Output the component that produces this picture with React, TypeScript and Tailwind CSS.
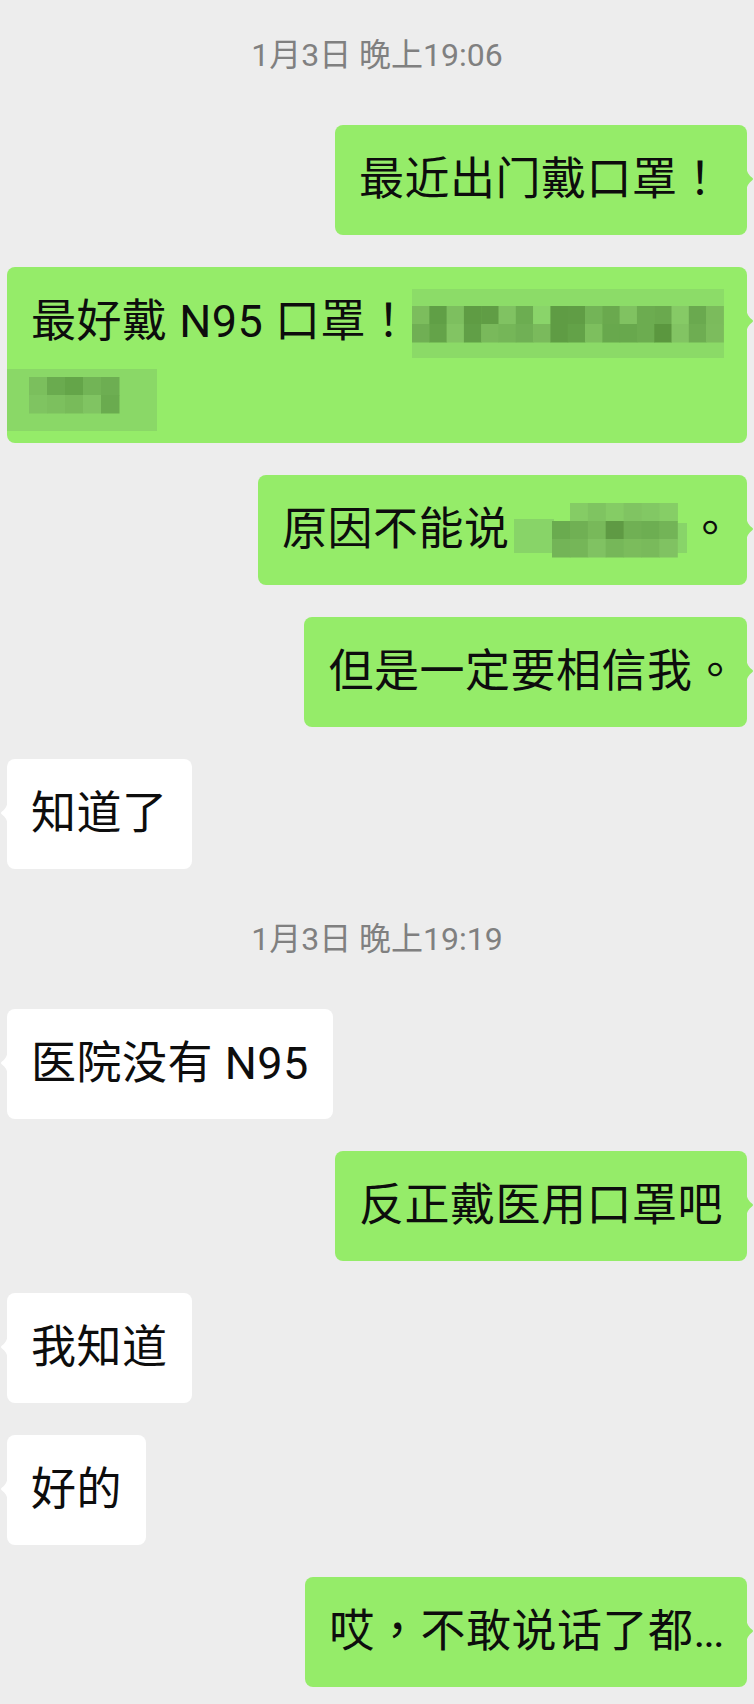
import React from "react";
import clsx from "clsx";

const FONT = "font-['Roboto','Noto_Sans_CJK_SC',sans-serif]";

// fullwidth punctuation sits centered in the reference, as in the TC cut
const P = ({ children, className }: { children: React.ReactNode; className?: string }) => (
  <span className={clsx("font-['Noto_Sans_CJK_TC',sans-serif] leading-[0]", className)}>{children}</span>
);

type Cell = { x: number; y: number; w: number; h: number; fill: string };

function grid(x0: number, y0: number, cw: number, ch: number, rows: string[][]): Cell[] {
  const cells: Cell[] = [];
  rows.forEach((row, r) =>
    row.forEach((fill, c) => cells.push({ x: x0 + c * cw, y: y0 + r * ch, w: cw + 0.5, h: ch + 0.5, fill }))
  );
  return cells;
}

// pixelated (censored) part of a message
function Mosaic({ width, cells, className }: { width: number; cells: Cell[]; className?: string }) {
  return (
    <svg
      width={width}
      height={66}
      viewBox={`0 0 ${width} 66`}
      className={clsx("inline-block align-top overflow-visible", className)}
    >
      {cells.map((c, i) => (
        <rect key={i} x={c.x} y={c.y} width={c.w} height={c.h} fill={c.fill} />
      ))}
    </svg>
  );
}

const mosaicA: Cell[] = [
  { x: 0, y: 0, w: 312, h: 17, fill: "#8cdc68" },
  { x: 0, y: 53, w: 312, h: 16, fill: "#8bda67" },
  ...grid(0, 17, 17.3, 18, [
    ["#7cbd5d", "#609f46", "#7dbf5f", "#5f9c44", "#609d45", "#80c262", "#6cad51", "#8ad46a", "#5f9c44", "#609d45", "#73b457", "#6aa94e", "#80c261", "#6cac50", "#6aa94e", "#86ca66", "#6aa94f", "#7bbb5c"],
    ["#70af54", "#64a349", "#82c463", "#619f47", "#79b95b", "#75b658", "#70b055", "#7aba5c", "#5f9c44", "#63a248", "#7dbf5e", "#68a84d", "#68a84d", "#6cac50", "#5b973f", "#82c463", "#6ead52", "#7cbc5d"],
  ]),
];

const mosaicB: Cell[] = [
  { x: 0, y: 14, w: 150, h: 62, fill: "#8ad867" },
  ...grid(22, 22, 18, 18, [
    ["#7bbf5d", "#6aab4f", "#64a549", "#72b456", "#6dae52"],
    ["#7fc461", "#7cc05e", "#78bb5a", "#80c462", "#6aab4f"],
  ]),
];

const mosaicC: Cell[] = [
  { x: 5, y: 22, w: 40, h: 34, fill: "#88d468" },
  { x: 166, y: 26, w: 12, h: 30, fill: "#88d469" },
  ...grid(61, 6, 17.9, 18, [["#85cc65", "#7fc461", "#85cc65", "#80c462", "#82c864", "#86ce66"]]),
  ...grid(43, 24, 17.9, 18, [
    ["#6aab4f", "#70b054", "#78b95a", "#5f9a44", "#70b054", "#6dae52", "#73b457"],
    ["#73b457", "#75b658", "#80c262", "#76b759", "#7bbc5c", "#79ba5b", "#80c262"],
  ]),
];

function Tail({ out }: { out: boolean }) {
  return out ? (
    <svg width="8" height="24" viewBox="0 0 8 24" className="absolute top-[42px] -right-[7px]">
      <path d="M0 0 Q1 7 6 10.5 Q8 12 6 13.5 Q1 17 0 24 Z" fill="#95ec69" />
    </svg>
  ) : (
    <svg width="8" height="24" viewBox="0 0 8 24" className="absolute top-[42px] -left-[7px]">
      <path d="M8 0 Q7 7 2 10.5 Q0 12 2 13.5 Q7 17 8 24 Z" fill="#ffffff" />
    </svg>
  );
}

function Bubble({ out, children }: { out?: boolean; children: React.ReactNode }) {
  return (
    <div className={clsx("flex", out ? "justify-end" : "justify-start")}>
      <div
        className={clsx(
          "relative max-w-full rounded-[8px] px-6 py-[22px] text-[45px] leading-[66px] tracking-[0.5px] text-[#0d0d0d] whitespace-nowrap",
          out ? "bg-[#95ec69]" : "bg-white"
        )}
      >
        {children}
        <Tail out={!!out} />
      </div>
    </div>
  );
}

function Time({ text }: { text: string }) {
  return (
    <div className="h-[76px] flex items-center justify-center text-[32px] text-[#808080]">{text}</div>
  );
}

export default function App() {
  return (
    <div className={clsx("min-h-screen w-full bg-[#ededed] px-[7px] pt-[17px] pb-4", FONT)}>
      <div className="flex flex-col gap-8">
        <Time text="1月3日 晚上19:06" />

        <Bubble out>
          最近出门戴口罩<P>！</P>
        </Bubble>

        <Bubble out>
          最好戴 N95 口罩<P>！</P>
          <Mosaic width={312} cells={mosaicA} />
          <br />
          <Mosaic width={150} cells={mosaicB} className="-ml-[24px]" />
        </Bubble>

        <Bubble out>
          原因不能说
          <Mosaic width={178} cells={mosaicC} />
          <P className="-mr-[10px]">。</P>
        </Bubble>

        <Bubble out>
          但是一定要相信我<P className="-mr-[15px]">。</P>
        </Bubble>

        <Bubble>知道了</Bubble>

        <Time text="1月3日 晚上19:19" />

        <Bubble>医院没有 N95</Bubble>

        <Bubble out>反正戴医用口罩吧</Bubble>

        <Bubble>我知道</Bubble>

        <Bubble>好的</Bubble>

        <Bubble out>
          哎<P>，</P>不敢说话了都<span className="tracking-[-2px]">...</span>
        </Bubble>
      </div>
    </div>
  );
}
